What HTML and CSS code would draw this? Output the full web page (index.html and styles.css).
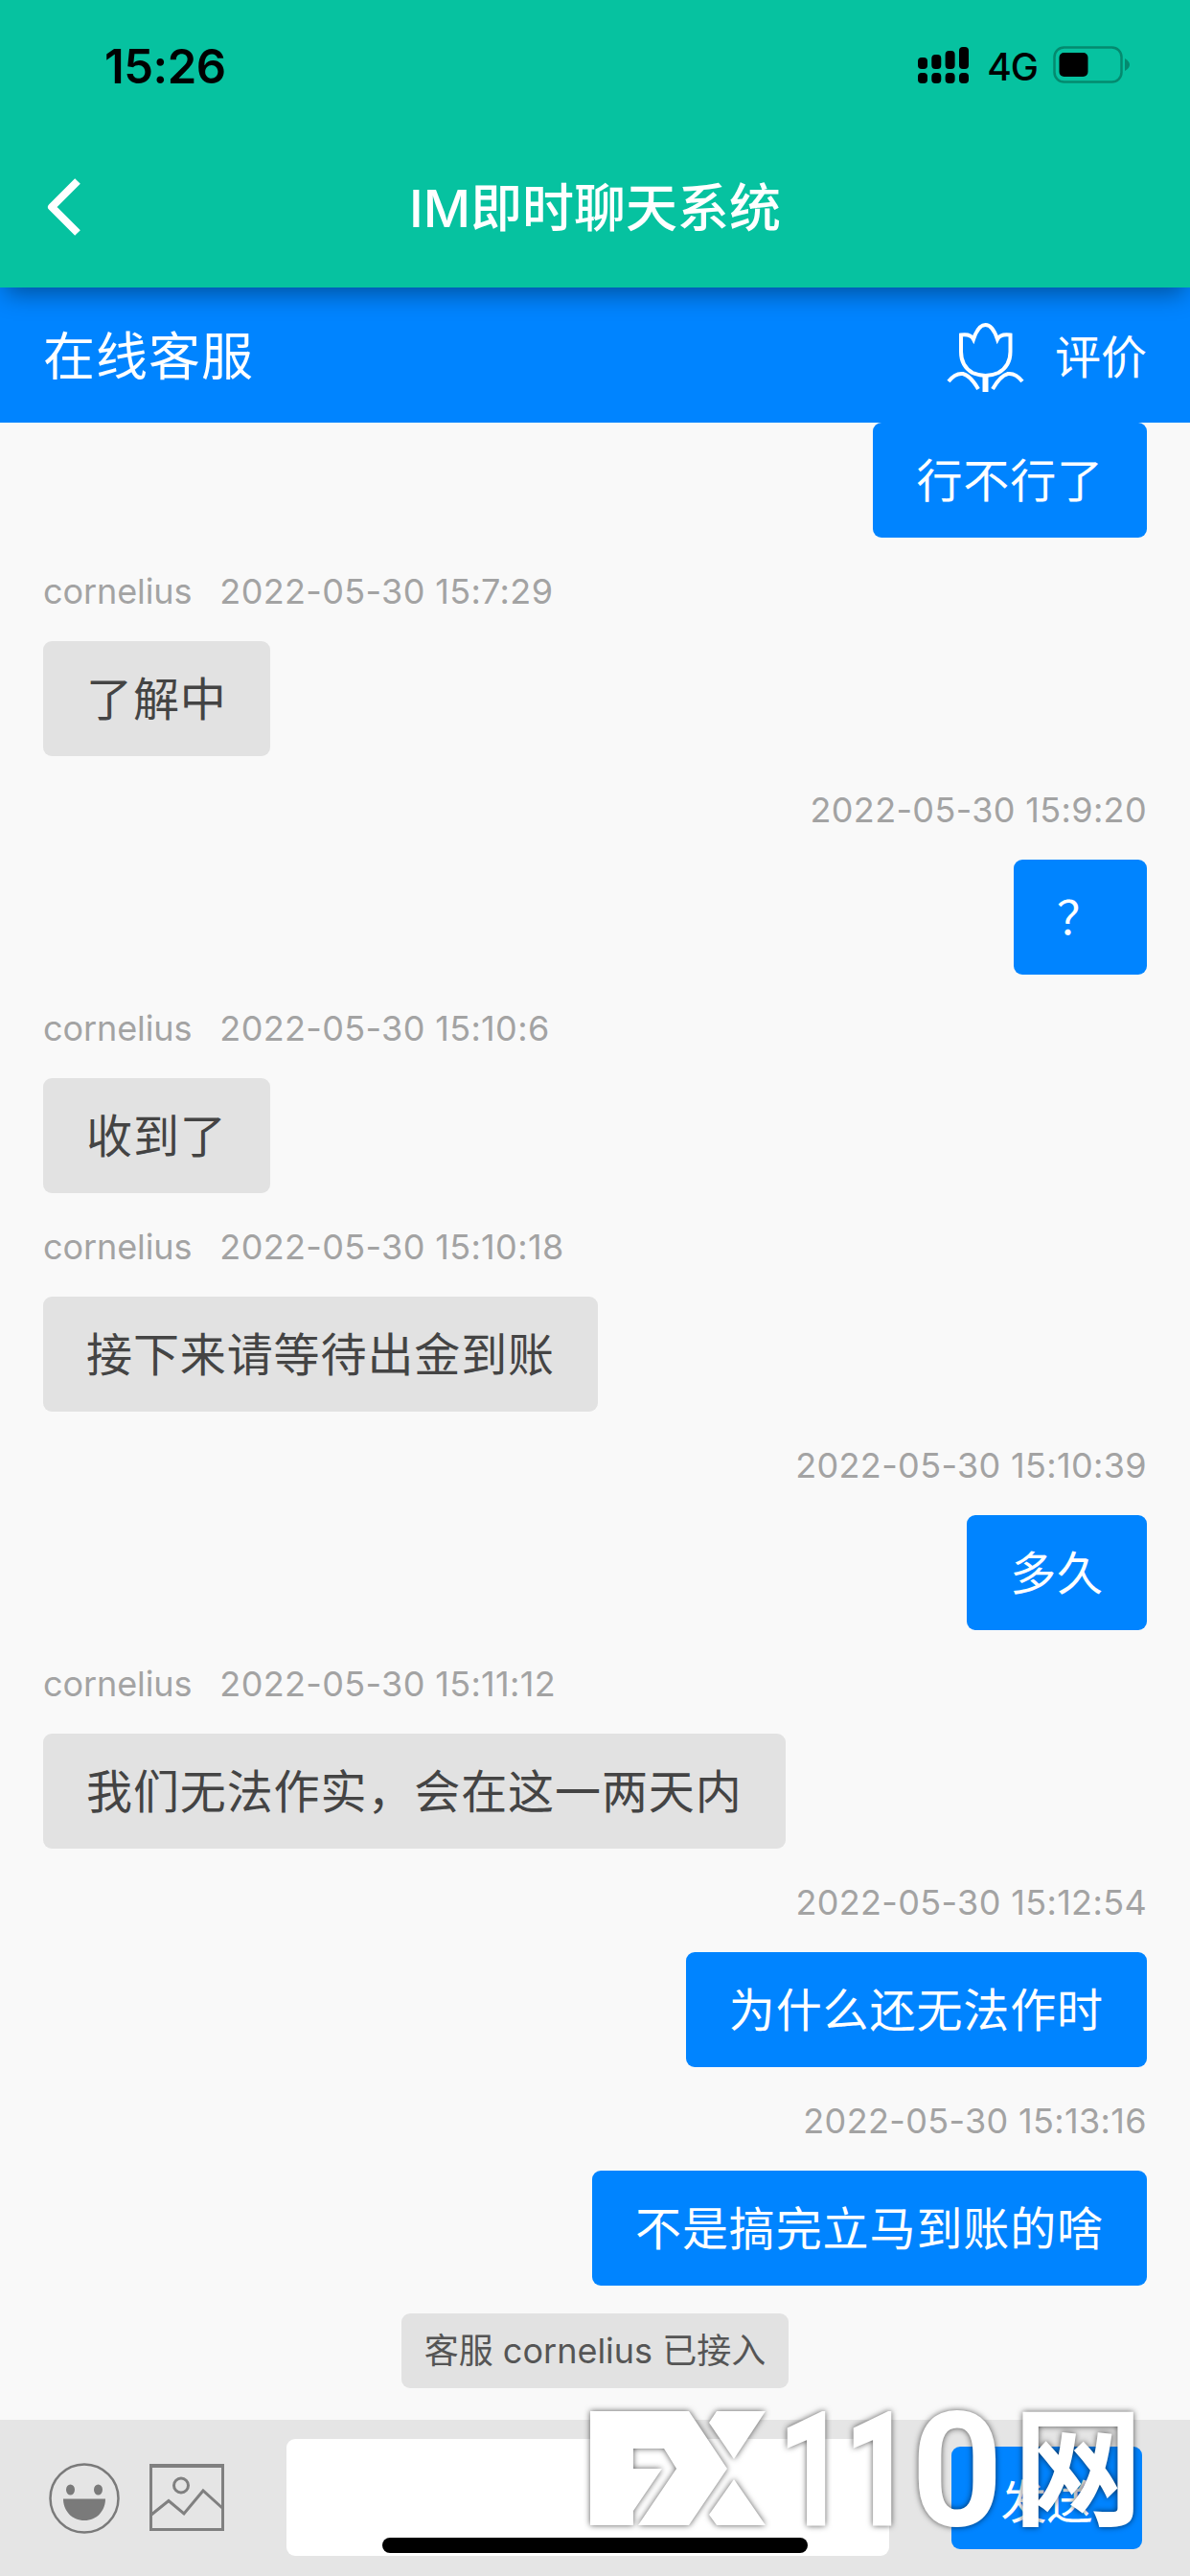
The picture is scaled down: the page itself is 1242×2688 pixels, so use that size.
FILE: index.html
```html
<!DOCTYPE html>
<html lang="zh-CN">
<head>
    <meta charset="UTF-8">
    <meta name="viewport" content="width=device-width, initial-scale=1.0">
    <title>IM即时聊天系统</title>
    <link rel="stylesheet" href="styles.css">
</head>
<body>
    <div class="phone">
        <header class="header">
            <div class="status-bar">
                <span class="time">15:26</span>
                <div class="status-icons">
                    <svg class="signal" width="54" height="40" viewBox="0 0 54 40">
                        <rect x="0" y="12" width="10" height="12" rx="4"/>
                        <rect x="14.3" y="9" width="10" height="15" rx="4"/>
                        <rect x="28.6" y="5" width="10" height="19" rx="4"/>
                        <rect x="43" y="1" width="10" height="23" rx="4"/>
                        <rect x="0" y="28" width="10" height="11" rx="4"/>
                        <rect x="14.3" y="28" width="10" height="11" rx="4"/>
                        <rect x="28.6" y="28" width="10" height="11" rx="4"/>
                        <rect x="43" y="28" width="10" height="11" rx="4"/>
                    </svg>
                    <span class="network">4G</span>
                    <svg class="battery" width="82" height="40" viewBox="0 0 82 40">
                        <rect x="1.5" y="1.5" width="70" height="36" rx="10" fill="none" stroke="#048a6f" stroke-width="2.5"/>
                        <rect x="6.5" y="7" width="30" height="25" rx="5"/>
                        <path d="M75 13q5 3 5 6.500t-5 6.500z" fill="#048a6f"/>
                    </svg>
                </div>
            </div>
            <div class="nav-bar">
                <svg class="back" width="40" height="64" viewBox="0 0 40 64">
                    <path d="M36 5L9 32L36 59" fill="none" stroke="#fff" stroke-width="8" stroke-linejoin="round"/>
                </svg>
                <h1>IM即时聊天系统</h1>
            </div>
        </header>

        <div class="service-bar">
            <span class="service-name">在线客服</span>
            <div class="rate">
                <svg class="flower" width="88" height="80" viewBox="0 0 88 80">
                    <path d="M18 18.500Q28 17 31 23Q36 8 43.500 8Q51 8 56 23Q59 17 69.500 18.500V36Q69.500 51 57 58Q43.500 64 30 58Q18 51 18 36Z"/>
                    <path d="M5 67Q12 58 20 59Q28 61 36 75"/>
                    <path d="M82 67Q75 58 67 59Q59 61 51 75"/>
                    <path d="M43.500 62V78" class="stem"/>
                </svg>
                <span class="rate-text">评价</span>
            </div>
        </div>

        <main class="chat">
            <div class="message mine">
                <div class="bubble">行不行了</div>
            </div>
            <div class="message">
                <div class="meta"><span class="sender">cornelius</span><span>2022-05-30 15:7:29</span></div>
                <div class="bubble">了解中</div>
            </div>
            <div class="message mine">
                <div class="meta"><span>2022-05-30 15:9:20</span></div>
                <div class="bubble">？</div>
            </div>
            <div class="message">
                <div class="meta"><span class="sender">cornelius</span><span>2022-05-30 15:10:6</span></div>
                <div class="bubble">收到了</div>
            </div>
            <div class="message">
                <div class="meta"><span class="sender">cornelius</span><span>2022-05-30 15:10:18</span></div>
                <div class="bubble">接下来请等待出金到账</div>
            </div>
            <div class="message mine">
                <div class="meta"><span>2022-05-30 15:10:39</span></div>
                <div class="bubble">多久</div>
            </div>
            <div class="message">
                <div class="meta"><span class="sender">cornelius</span><span>2022-05-30 15:11:12</span></div>
                <div class="bubble">我们无法作实，会在这一两天内</div>
            </div>
            <div class="message mine">
                <div class="meta"><span>2022-05-30 15:12:54</span></div>
                <div class="bubble">为什么还无法作时</div>
            </div>
            <div class="message mine">
                <div class="meta"><span>2022-05-30 15:13:16</span></div>
                <div class="bubble">不是搞完立马到账的啥</div>
            </div>
            <div class="notice">客服 cornelius 已接入</div>
        </main>

        <footer class="input-bar">
            <svg class="smile" width="76" height="76" viewBox="0 0 76 76">
                <circle cx="38" cy="38" r="35.500" fill="none" stroke="#7a7a7a" stroke-width="2.500"/>
                <ellipse cx="23.500" cy="29" rx="4.500" ry="5.500"/>
                <ellipse cx="52.500" cy="29" rx="4.500" ry="5.500"/>
                <path d="M16 38.500H60C60 51 51 61 38 61S16 51 16 38.500Z"/>
            </svg>
            <svg class="picture" width="78" height="72" viewBox="0 0 78 72">
                <path d="M1.500 3H76.500V69.500H1.500Z"/>
                <path d="M0 3H78" stroke-width="4"/>
                <circle cx="33" cy="23.500" r="7.500"/>
                <path d="M2 54L20 39.500L36 53L56 29L76 47"/>
            </svg>
            <div class="text-input"></div>
            <button class="send" type="button">发送</button>
        </footer>

        <div class="home-indicator"></div>

        <!-- FX110 brand mark over the input bar -->
        <svg class="brand" width="642" height="198" viewBox="600 2490 642 198">
            <path d="M616 2516H719L759 2576L719 2635H666L706 2576L693 2555H661V2576H691L661 2620V2635H616Z"/>
            <path d="M748 2516H799L766 2566L740 2528Z"/>
            <path d="M766 2587L799 2635H748L740 2624Z"/>
            <text class="brand-digits narrow" x="813" y="2634" textLength="138" lengthAdjust="spacingAndGlyphs">11</text>
            <text class="brand-digits" x="951" y="2635">0</text>
            <text class="brand-word" x="1057" y="2625">网</text>
        </svg>
    </div>
</body>
</html>
```
FILE: styles.css
```css
* {
    box-sizing: border-box;
}
body {
    margin: 0;
    font-family: Inter, "Noto Sans CJK SC", sans-serif;
    background-color: #f9f9f9;
}
.phone {
    position: relative;
    display: flex;
    flex-direction: column;
    width: 1242px;
    height: 2688px;
    overflow: hidden;
}
.header {
    position: relative;
    z-index: 1;
    height: 300px;
    background-color: #06c2a0;
    box-shadow: 0 12px 24px -6px rgba(0, 0, 0, 0.4);
}
.status-bar {
    display: flex;
    align-items: center;
    justify-content: space-between;
    height: 132px;
    padding: 4px 61px 0 109px;
    color: #000;
}
.time {
    padding-top: 2px;
    font-size: 49px;
    font-weight: 600;
    letter-spacing: -0.5px;
}
.status-icons {
    display: flex;
    align-items: center;
}
.network {
    margin: 3px 16px 0 18px;
    font-size: 39px;
    font-weight: 500;
    letter-spacing: -1px;
}
.nav-bar {
    display: grid;
    grid-template-columns: 80px 1fr 80px;
    align-items: center;
    height: 168px;
    padding: 0 45px;
}
h1 {
    margin: 4px 0 0;
    color: #fff;
    font-size: 54px;
    font-weight: 500;
    line-height: 80px;
    text-align: center;
    white-space: nowrap;
}
.service-bar {
    display: flex;
    align-items: center;
    justify-content: space-between;
    height: 141px;
    padding: 0 45px;
    background-color: #0084ff;
    color: #fff;
}
.service-name {
    margin-bottom: 4px;
    font-size: 54px;
    letter-spacing: 1px;
}
.rate {
    display: flex;
    align-items: center;
    gap: 28px;
    font-size: 48px;
}
.rate-text {
    margin-bottom: 4px;
}
.flower {
    fill: none;
    stroke: #fff;
    stroke-width: 4;
}
.flower .stem {
    stroke-width: 6;
}
.chat {
    flex: 1;
    display: flex;
    flex-direction: column;
    padding: 0 45px;
}
.message {
    display: flex;
    flex-direction: column;
    align-items: flex-start;
}
.mine {
    align-items: flex-end;
}
.meta {
    display: flex;
    height: 108px;
    padding-top: 2px;
    color: #a3a3a3;
    font-size: 36px;
    line-height: 108px;
    letter-spacing: 0.35px;
}
.sender {
    margin-right: 29px;
    letter-spacing: -0.1px;
}
.bubble {
    height: 120px;
    padding: 0 45px;
    border-radius: 9px;
    background-color: #e2e2e2;
    color: #444;
    font-size: 48px;
    line-height: 122px;
    letter-spacing: 0.9px;
}
.mine .bubble {
    background-color: #0084ff;
    color: #fff;
}
.notice {
    align-self: center;
    height: 78px;
    margin-top: 29px;
    padding: 0 24px;
    border-radius: 9px;
    background-color: #e2e2e2;
    color: #555;
    font-size: 36px;
    line-height: 78px;
}
.input-bar {
    display: flex;
    height: 163px;
    padding: 20px 50px 0 50px;
    background-color: #e5e5e5;
}
.smile {
    margin-top: 24px;
    fill: #7a7a7a;
}
.picture {
    margin: 25px 65px 0 30px;
    fill: none;
    stroke: #808080;
    stroke-width: 3;
}
.text-input {
    width: 629px;
    height: 122px;
    border-radius: 9px;
    background-color: #fff;
}
.send {
    width: 199px;
    height: 107px;
    margin: 8px 0 0 auto;
    border: none;
    border-radius: 9px;
    background-color: #0084ff;
    color: #fff;
    font-family: inherit;
    font-size: 48px;
}
.home-indicator {
    position: absolute;
    bottom: 24px;
    left: 399px;
    width: 444px;
    height: 16px;
    border-radius: 8px;
    background-color: #000;
}
.brand {
    position: absolute;
    right: 0;
    bottom: 0;
    fill: #fff;
    filter: drop-shadow(0 0 3px rgba(0, 0, 0, 0.65));
}
.brand-digits {
    font-family: Roboto, sans-serif;
    font-size: 167px;
    font-weight: 700;
}
.brand-digits.narrow {
    font-size: 164px;
    stroke: #fff;
    stroke-width: 3;
}
.brand-word {
    font-family: "Noto Sans CJK SC", sans-serif;
    font-size: 136px;
    font-weight: 700;
}
```
